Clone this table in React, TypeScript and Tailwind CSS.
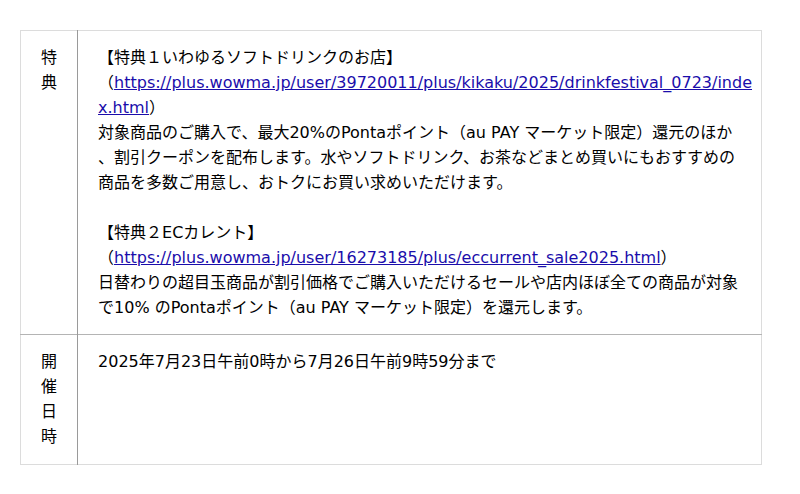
export default function App() {
  const font = { fontFamily: '"DejaVu Sans", "Noto Sans CJK JP", sans-serif' }
  const link = 'text-[#1a0dab] underline'
  return (
    <div className="bg-white w-[800px] h-[494px] pt-[30px] pl-[20px]" style={font}>
      <table className="w-[742px] border-collapse border border-[#dcdcdc] text-[16px] leading-[25px] text-black">
        <tbody>
          <tr className="border-b border-[#b4b4b4]">
            <th className="w-[57px] px-[20px] pt-[14px] pb-[14px] align-top text-center font-normal border-r border-[#9a9a9a]">特典</th>
            <td className="pl-[20px] pr-[8px] pt-[14px] pb-[14px] align-top break-all">
              【特典１いわゆるソフトドリンクのお店】<br />
              （<a className={link} href="#">https://plus.wowma.jp/user/39720011/plus/kikaku/2025/drinkfestival_0723/index.html</a>）<br />
              対象商品のご購入で、最大20%のPontaポイント（au PAY マーケット限定）還元のほか<br />
              、割引クーポンを配布します。水やソフトドリンク、お茶などまとめ買いにもおすすめの<br />
              商品を多数ご用意し、おトクにお買い求めいただけます。<br />
              <br />
              【特典２ECカレント】<br />
              （<a className={link} href="#">https://plus.wowma.jp/user/16273185/plus/eccurrent_sale2025.html</a>）<br />
              日替わりの超目玉商品が割引価格でご購入いただけるセールや店内ほぼ全ての商品が対象<br />
              で10% のPontaポイント（au PAY マーケット限定）を還元します。
            </td>
          </tr>
          <tr>
            <th className="w-[57px] px-[20px] pt-[14px] pb-[15px] align-top text-center font-normal border-r border-[#9a9a9a]">開催日時</th>
            <td className="pl-[20px] pr-[8px] pt-[14px] pb-[15px] align-top">2025年7月23日午前0時から7月26日午前9時59分まで</td>
          </tr>
        </tbody>
      </table>
    </div>
  )
}
